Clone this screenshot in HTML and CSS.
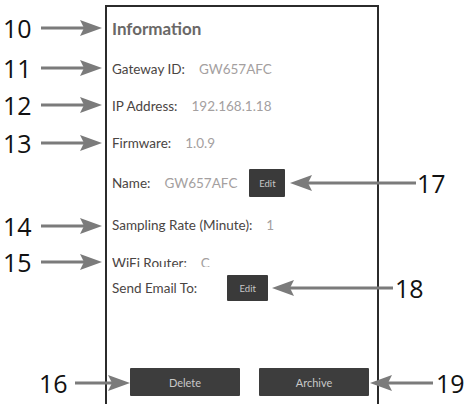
FILE: index.html
```html
<!DOCTYPE html>
<html lang="en">
<head>
  <meta charset="UTF-8">
  <meta name="viewport" content="width=device-width, initial-scale=1.0">
  <title>Gateway Information</title>
  <link rel="stylesheet" href="styles.css">
</head>
<body>
  <div id="stage">
    <div id="panel">
      <div class="row title-row">Information</div>
      <div class="row r-gateway"><span class="label">Gateway ID:</span><span class="value">GW657AFC</span></div>
      <div class="row r-ip"><span class="label">IP Address:</span><span class="value">192.168.1.18</span></div>
      <div class="row r-firmware"><span class="label">Firmware:</span><span class="value">1.0.9</span></div>
      <div class="row r-name"><span class="label">Name:</span><span class="value">GW657AFC</span><button class="edit">Edit</button></div>
      <div class="row r-sampling"><span class="label">Sampling Rate (Minute):</span><span class="value">1</span></div>
      <div class="row r-wifi"><span class="label">WiFi Router:</span><span class="value">C</span></div>
      <div class="row r-email"><span class="label">Send Email To:</span><button class="edit">Edit</button></div>
      <div class="actions">
        <button class="big">Delete</button>
        <button class="big">Archive</button>
      </div>
    </div>

    <!-- callout numbers -->
    <div class="callout n10">10</div>
    <div class="callout n11">11</div>
    <div class="callout n12">12</div>
    <div class="callout n13">13</div>
    <div class="callout n14">14</div>
    <div class="callout n15">15</div>
    <div class="callout n16">16</div>
    <div class="callout n17">17</div>
    <div class="callout n18">18</div>
    <div class="callout n19">19</div>

    <svg id="arrows" width="473" height="404" viewBox="0 0 473 404">
      <g stroke="#7b7b7b" stroke-width="3" fill="none">
        <line x1="41" y1="28" x2="86" y2="28"/>
        <line x1="41" y1="68" x2="86" y2="68"/>
        <line x1="41" y1="105" x2="86" y2="105"/>
        <line x1="41" y1="143" x2="86" y2="143"/>
        <line x1="41" y1="226" x2="86" y2="226"/>
        <line x1="41" y1="262" x2="86" y2="262"/>
        <line x1="75" y1="383" x2="114" y2="383"/>
        <line x1="306" y1="183" x2="416" y2="183"/>
        <line x1="288" y1="288" x2="393" y2="288"/>
        <line x1="386" y1="383" x2="433" y2="383"/>
      </g>
      <g fill="#7b7b7b">
        <polygon points="102,28 80,20 84,28 80,36"/>
        <polygon points="102,68 80,60 84,68 80,76"/>
        <polygon points="102,105 80,97 84,105 80,113"/>
        <polygon points="102,143 80,135 84,143 80,151"/>
        <polygon points="102,226 80,218 84,226 80,234"/>
        <polygon points="102,262 80,254 84,262 80,270"/>
        <polygon points="130,383 108,375 112,383 108,391"/>
        <polygon points="290,183 312,175 308,183 312,191"/>
        <polygon points="272,288 294,280 290,288 294,296"/>
        <polygon points="370,383 392,375 388,383 392,391"/>
      </g>
    </svg>
  </div>
</body>
</html>
```

FILE: styles.css
```css
html, body {
  margin: 0;
  padding: 0;
  background: #fff;
  overflow: hidden;
}
#stage {
  position: relative;
  width: 473px;
  height: 404px;
  overflow: hidden;
}
#panel {
  box-sizing: border-box;
  margin: 5px 0 0 105px;
  width: 274px;
  height: 420px;
  border: 2px solid #2b2b2b;
  border-bottom: none;
  padding-left: 5px;
  font-family: 'Lato', sans-serif;
  font-size: 13.5px;
  color: #4a4543;
}
.row {
  display: flex;
  align-items: center;
  white-space: nowrap;
}
.title-row {
  height: 42px;
  font-size: 17px;
  font-weight: bold;
  color: #6a6867;
}
.r-gateway { height: 40px; }
.r-ip { height: 34px; }
.r-firmware { height: 40px; }
.r-name { height: 40px; }
.r-sampling { height: 44px; }
.r-wifi {
  box-sizing: border-box;
  height: 20px;
  padding-top: 8px;
  align-items: flex-start;
  overflow: hidden;
  line-height: 16px;
}
.r-email {
  height: 26px;
  margin-top: 8px;
}
.label {
  margin-right: 14px;
}
.value {
  color: #a4a0a0;
}
.edit {
  height: 28px;
  width: 36px;
  padding: 0;
  border: none;
  border-radius: 1px;
  background: #3a3a3a;
  color: #c8c8c8;
  font-family: 'Lato', sans-serif;
  font-size: 9.5px;
}
.r-name .edit { margin-left: 12px; }
.r-email .edit {
  width: 41px;
  height: 26px;
}
.r-email .label { margin-right: 30px; }
.actions {
  display: flex;
  gap: 19px;
  margin-top: 67px;
  padding-left: 18px;
}
.big {
  width: 110px;
  height: 28px;
  border: none;
  border-radius: 1px;
  background: #3d3d3d;
  color: #c8c8c8;
  font-family: 'Lato', sans-serif;
  font-size: 11px;
}
.callout {
  position: absolute;
  height: 30px;
  line-height: 30px;
  font-family: 'Open Sans', sans-serif;
  font-size: 25px;
  color: #111;
}
.n10 { left: 3px; top: 13px; }
.n11 { left: 3px; top: 53px; }
.n12 { left: 3px; top: 90px; }
.n13 { left: 3px; top: 128px; }
.n14 { left: 3px; top: 211px; }
.n15 { left: 3px; top: 247px; }
.n16 { left: 39px; top: 368px; }
.n17 { left: 417px; top: 168px; }
.n18 { left: 395px; top: 273px; }
.n19 { left: 436px; top: 368px; }
#arrows {
  position: absolute;
  left: 0;
  top: 0;
  pointer-events: none;
}
```
